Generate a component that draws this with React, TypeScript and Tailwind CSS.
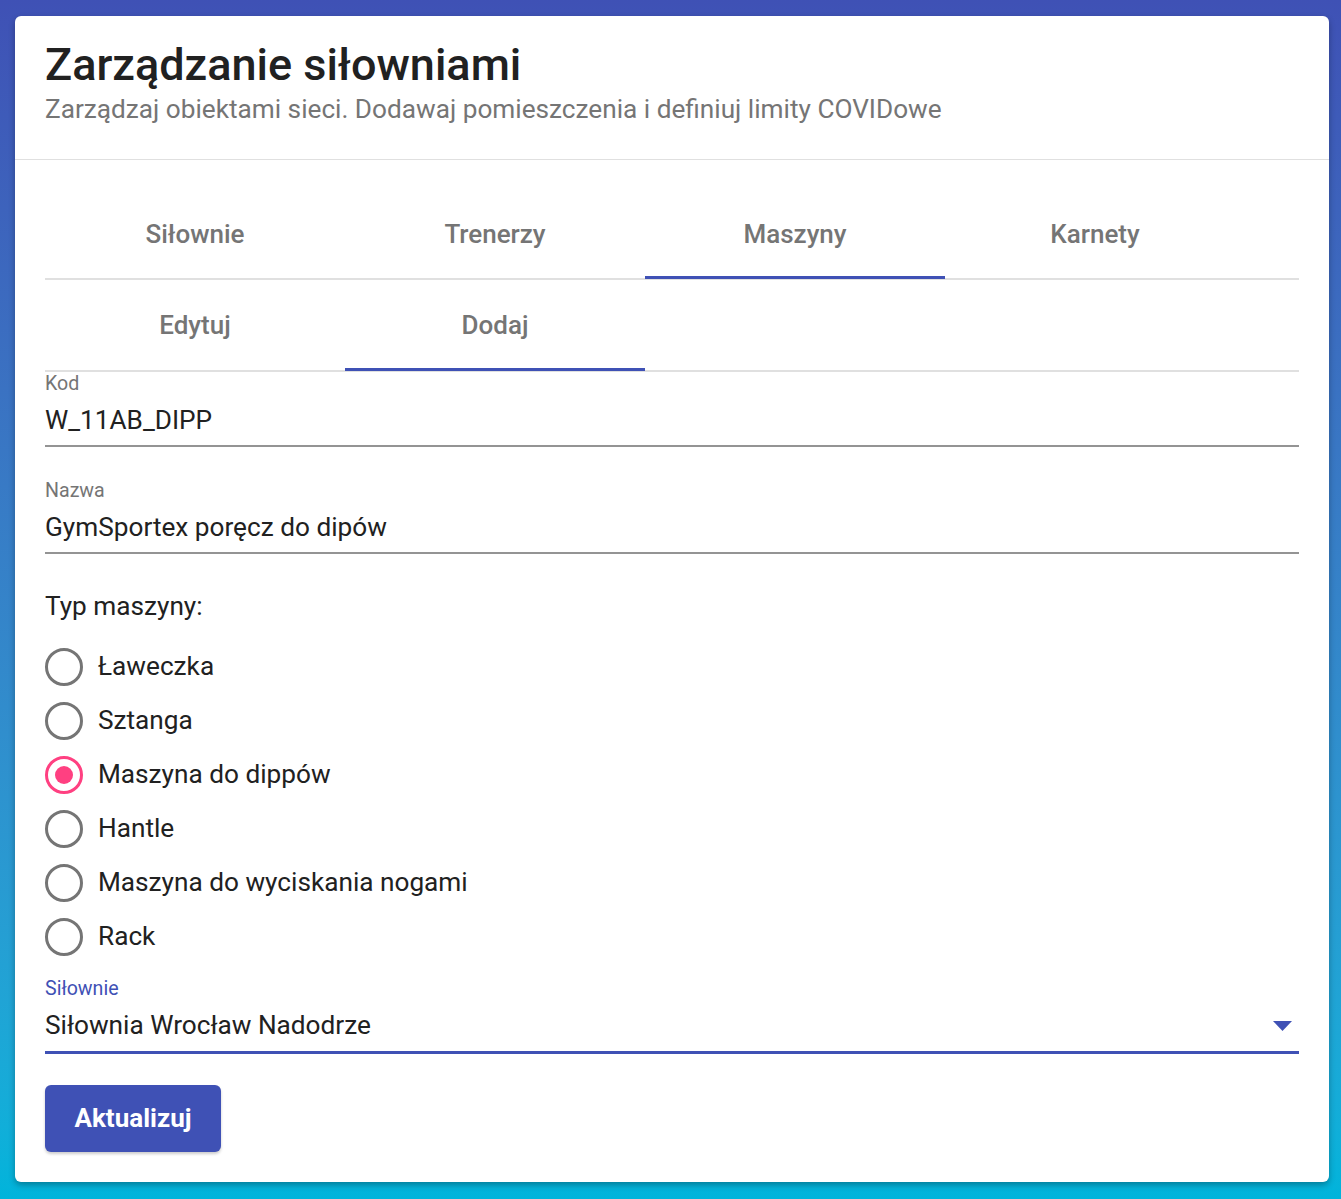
import { useState } from "react";

const mainTabs = ["Siłownie", "Trenerzy", "Maszyny", "Karnety"];
const subTabs = ["Edytuj", "Dodaj"];
const types = [
  "Ławeczka",
  "Sztanga",
  "Maszyna do dippów",
  "Hantle",
  "Maszyna do wyciskania nogami",
  "Rack",
];

function TabRow({ items, active, height }: { items: string[]; active: number; height: string }) {
  return (
    <div className="flex border-b-2 border-[#e0e0e0]">
      {items.map((label, i) => (
        <div key={label} className={`relative flex w-[300px] items-center justify-center ${height}`}>
          <span className="text-[26px] font-medium text-[#757575]">{label}</span>
          {i === active && <div className="absolute bottom-[-1px] left-0 right-0 h-[3px] bg-[#3f51b5]" />}
        </div>
      ))}
    </div>
  );
}

function Field({ label, value }: { label: string; value: string }) {
  return (
    <div className="border-b-2 border-[#949494] pb-[10px]">
      <div className="text-[19.6px] leading-[23px] text-[#757575]">{label}</div>
      <div className="mt-[10px] text-[26.2px] leading-[30px] text-[#212121]">{value}</div>
    </div>
  );
}

export default function App() {
  const [selected, setSelected] = useState(2);

  return (
    <div className="min-h-screen bg-gradient-to-b from-[#3f51b5] to-[#00b4db] pl-[15px] pr-[12px] pt-[16px] pb-[17px] font-['Roboto',sans-serif]">
      <div className="rounded-[6px] bg-white shadow-[0_3px_6px_rgba(0,0,0,0.3)]">
        <div className="border-b border-[#e0e0e0] px-[30px] pt-[22px] pb-[35px]">
          <h1 className="text-[45px] leading-[53px] font-medium text-[#212121]">Zarządzanie siłowniami</h1>
          <p className="mt-[3px] text-[26.2px] leading-[30px] text-[#757575]">
            Zarządzaj obiektami sieci. Dodawaj pomieszczenia i definiuj limity COVIDowe
          </p>
        </div>

        <div className="px-[30px] pt-[30px] pb-[30px]">
          <TabRow items={mainTabs} active={2} height="h-[88px]" />
          <TabRow items={subTabs} active={1} height="h-[90px]" />

          <Field label="Kod" value="W_11AB_DIPP" />
          <div className="mt-[32px]">
            <Field label="Nazwa" value="GymSportex poręcz do dipów" />
          </div>

          <div className="mt-[37px] text-[26.2px] leading-[30px] text-[#212121]">Typ maszyny:</div>
          <div className="mt-[19px] flex flex-col">
            {types.map((t, i) => (
              <label key={t} className="flex h-[54px] cursor-pointer items-center gap-[15px]" onClick={() => setSelected(i)}>
                <span
                  className={`flex h-[38px] w-[38px] items-center justify-center rounded-full border-[3px] ${
                    i === selected ? "border-[#ff4081]" : "border-[#757575]"
                  }`}
                >
                  {i === selected && <span className="h-[18px] w-[18px] rounded-full bg-[#ff4081]" />}
                </span>
                <span className="text-[26.2px] text-[#212121]">{t}</span>
              </label>
            ))}
          </div>

          <div className="mt-[13px] border-b-[3px] border-[#3f51b5] pb-[11px]">
            <div className="text-[19.6px] leading-[23px] text-[#3f51b5]">Siłownie</div>
            <div className="mt-[10px] flex items-center justify-between">
              <span className="text-[26.2px] leading-[30px] text-[#212121]">Siłownia Wrocław Nadodrze</span>
              <svg width="19" height="10" viewBox="0 0 19 10" className="mr-[7px] mt-[2px]">
                <path d="M0 0 L19 0 L9.5 10 Z" fill="#3f51b5" />
              </svg>
            </div>
          </div>

          <button
            type="button"
            className="mt-[31px] h-[67px] w-[176px] rounded-[6px] bg-[#3f51b5] text-[26px] font-bold text-white shadow-[0_2px_3px_rgba(0,0,0,0.2)]"
          >
            Aktualizuj
          </button>
        </div>
      </div>
    </div>
  );
}
